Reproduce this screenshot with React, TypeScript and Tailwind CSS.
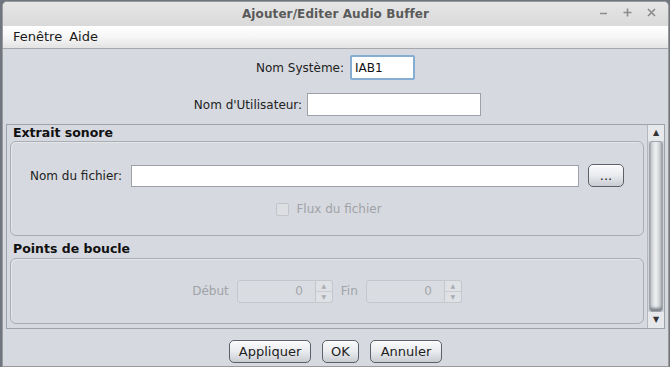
import React from "react";

const font = { fontFamily: '"DejaVu Sans", "Liberation Sans", sans-serif' };

function NimbusButton({ label, className = "" }: { label: string; className?: string }) {
  return (
    <div
      className={`flex items-center justify-center h-[23px] rounded-[5px] border border-[#5c6169] bg-gradient-to-b from-[#fbfbfc] via-[#e9ebee] to-[#c9ccd2] text-[13px] text-[#222] shadow-[inset_0_1px_0_#fff] ${className}`}
    >
      {label}
    </div>
  );
}

function Spinner() {
  return (
    <div className="flex h-[23px] w-[96px]">
      <div className="flex-1 flex items-center justify-end pr-[12px] bg-[#d9dce1] border border-[#c4c7cd] rounded-l-[3px] text-[12px] text-[#a3a6ab]">
        0
      </div>
      <div className="w-[17px] flex flex-col border border-l-0 border-[#c4c7cd] rounded-r-[3px] bg-[#dfe1e5]">
        <div className="flex-1 flex items-center justify-center border-b border-[#c9ccd1] text-[6px] text-[#a9acb1] leading-none">
          ▲
        </div>
        <div className="flex-1 flex items-center justify-center text-[6px] text-[#a9acb1] leading-none">▼</div>
      </div>
    </div>
  );
}

export default function App() {
  return (
    <div className="w-[670px] h-[367px] bg-[#6f7680] overflow-hidden" style={font}>
      <div className="ml-[2px] mr-[1px] mt-[1px] h-[366px] flex flex-col rounded-t-[5px] border border-[#9a9a9a] bg-[#d6d9df] overflow-hidden">
        {/* title bar */}
        <div className="relative h-[24px] flex items-center justify-center bg-gradient-to-b from-[#e6e6e6] to-[#dadada]">
          <span className="text-[12px] font-bold text-[#5a5a5a] tracking-[0.1px]">Ajouter/Editer Audio Buffer</span>
          <div className="absolute right-[11px] top-[5px] flex items-center gap-[13px]">
            <svg width="11" height="11" viewBox="0 0 11 11">
              <path d="M2 6.5h7" stroke="#8c8c8c" strokeWidth="1.6" />
            </svg>
            <svg width="11" height="11" viewBox="0 0 11 11">
              <path d="M1.5 5.5h8M5.5 1.5v8" stroke="#8c8c8c" strokeWidth="1.6" />
            </svg>
            <svg width="11" height="11" viewBox="0 0 11 11">
              <path d="M2 2l7 7M9 2l-7 7" stroke="#8c8c8c" strokeWidth="1.6" />
            </svg>
          </div>
        </div>

        {/* menu bar */}
        <div className="h-[23px] flex items-center gap-[7px] pl-[10px] bg-gradient-to-b from-[#ffffff] via-[#f6f6f6] to-[#e3e3e3] border-b border-[#a6a8ac] text-[13px] text-[#1a1a1a]">
          <span>Fenêtre</span>
          <span>Aide</span>
        </div>

        {/* name fields */}
        <div className="flex flex-col items-center pt-[6px]">
          <div className="flex items-center gap-[6px]">
            <span className="text-[12px] text-[#222]">Nom Système:</span>
            <div className="w-[65px] h-[25px] border-2 border-[#86aed3] rounded-[2px] bg-white flex items-center pl-[3px] text-[12px] text-[#111]">
              IAB1
            </div>
          </div>
          <div className="flex items-center gap-[5px] mt-[13px] ml-[4px]">
            <span className="text-[12px] text-[#222]">Nom d'Utilisateur:</span>
            <div className="w-[174px] h-[23px] border border-[#9da2aa] bg-white" />
          </div>
        </div>

        {/* scroll pane */}
        <div className="mt-[8px] mx-[3px] h-[205px] flex border border-[#9ea2a9]">
          <div className="flex-1 flex flex-col pl-[3px] pr-[3px]">
            <div className="h-[16px] pl-[3px] text-[12.5px] font-bold text-[#111] leading-[16px]">Extrait sonore</div>
            <div className="h-[95px] rounded-[6px] border border-[#a9adb4] shadow-[inset_1px_1px_0_#e4e6ea] flex flex-col">
              <div className="flex items-center mt-[22px] pl-[19px]">
                <span className="text-[12px] text-[#222] w-[101px]">Nom du fichier:</span>
                <div className="w-[448px] h-[22px] border border-[#9da2aa] bg-white" />
                <NimbusButton label="..." className="w-[36px] ml-[9px] text-[10px]" />
              </div>
              <div className="flex items-center justify-center mt-[13px] gap-[7px] ml-[4px]">
                <div className="w-[13px] h-[13px] rounded-[2px] border border-[#c2c5cb] bg-[#dcdee2]" />
                <span className="text-[12px] text-[#a0a3a8]">Flux du fichier</span>
              </div>
            </div>
            <div className="h-[22px] pl-[3px] pt-[5px] text-[12.5px] font-bold text-[#111] leading-[16px]">
              Points de boucle
            </div>
            <div className="h-[66px] rounded-[6px] border border-[#a9adb4] shadow-[inset_1px_1px_0_#e4e6ea] flex items-center justify-center">
              <span className="text-[12px] text-[#a0a3a8] mr-[8px]">Début</span>
              <Spinner />
              <span className="text-[12px] text-[#a0a3a8] ml-[8px] mr-[8px]">Fin</span>
              <Spinner />
            </div>
          </div>

          {/* scrollbar */}
          <div className="w-[17px] flex flex-col bg-[#d2d5db] border-l border-[#b4b7bd]">
            <div className="h-[16px] flex items-center justify-center text-[8px] text-[#333] leading-none bg-[#e6e8eb]">▲</div>
            <div className="flex-1 mx-[1px] rounded-[3px] bg-gradient-to-r from-[#c8cbd1] via-[#eef0f2] to-[#b9bcc2] border border-[#9fa3aa] shadow-[inset_0_-3px_3px_#7d8189]" />
            <div className="h-[16px] flex items-center justify-center text-[8px] text-[#333] leading-none bg-[#e6e8eb]">▼</div>
          </div>
        </div>

        {/* bottom buttons */}
        <div className="flex justify-center items-center gap-[11px] mt-[11px]">
          <NimbusButton label="Appliquer" className="w-[82px]" />
          <NimbusButton label="OK" className="w-[37px]" />
          <NimbusButton label="Annuler" className="w-[72px]" />
        </div>
      </div>
    </div>
  );
}
